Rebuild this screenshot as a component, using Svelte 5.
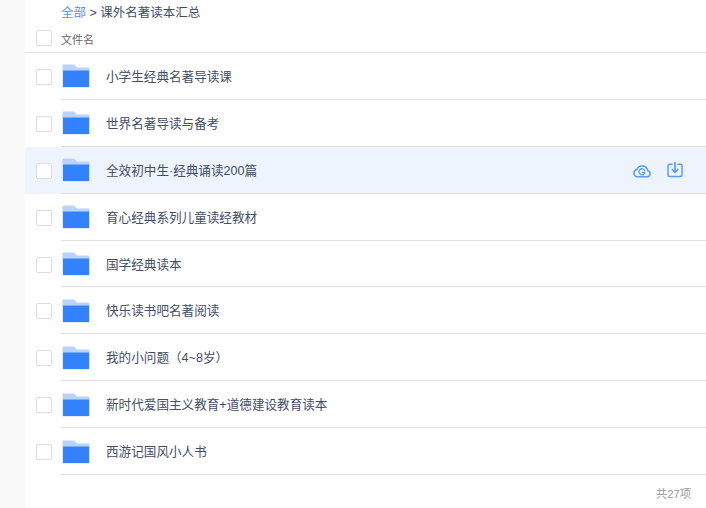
<script>
  const files = [
    '小学生经典名著导读课',
    '世界名著导读与备考',
    '全效初中生·经典诵读200篇',
    '育心经典系列儿童读经教材',
    '国学经典读本',
    '快乐读书吧名著阅读',
    '我的小问题（4~8岁）',
    '新时代爱国主义教育+道德建设教育读本',
    '西游记国风小人书'
  ];
  let hovered = $state(2);
</script>

<div class="page">
  <aside class="side"></aside>
  <main class="main">
    <div class="crumbs"><span class="link">全部</span> &gt; 课外名著读本汇总</div>
    <div class="head">
      <span class="check"></span>
      <span class="head-name">文件名</span>
    </div>
    <ul class="list">
      {#each files as name, i (name)}
        <li class="row" class:active={hovered === i}>
          <span class="check"></span>
          <div class="cell">
            <svg class="folder" width="28" height="24" viewBox="0 0 28 24">
              <path d="M.5 1.500 Q.5 .5 1.500 .5 H12 L15 3.500 H26.500 Q27.500 3.500 27.500 4.500 V8 H.5 Z" fill="#b9d3fb" />
              <path d="M.5 6.500 H27.500 V22.500 Q27.500 23.500 26.500 23.500 H1.500 Q.5 23.500 .5 22.500 Z" fill="#c5dafd" />
              <rect x="1" y="6.500" width="26" height="16.500" fill="#3281fd" />
            </svg>
            <span class="name">{name}</span>
            {#if hovered === i}
              <div class="actions">
                <svg width="18" height="15" viewBox="0 0 18 15" fill="none" stroke="#5a9bfb" stroke-width="1.500" stroke-linejoin="round" stroke-linecap="round">
                  <path d="M4 13.800 H14 A3.100 3.100 0 0 0 14.800 7.700 A5.800 5.800 0 0 0 3.800 6.400 A3.800 3.800 0 0 0 4 13.800 Z" />
                  <path d="M11.600 7.300 A3 3 0 1 0 11.900 9.500 H9.400" stroke-width="1.300" />
                </svg>
                <svg width="16" height="16" viewBox="0 0 16 16" fill="none" stroke="#5a9bfb" stroke-width="1.500" stroke-linejoin="round" stroke-linecap="round">
                  <path d="M5 2.300 H2.500 Q1 2.300 1 3.800 V13 Q1 14.500 2.500 14.500 H13.500 Q15 14.500 15 13 V3.800 Q15 2.300 13.500 2.300 H11" />
                  <path d="M8 .8 V10 M5.300 7.500 L8 10.300 L10.700 7.500" stroke-width="1.700" />
                </svg>
              </div>
            {/if}
          </div>
        </li>
      {/each}
    </ul>
    <div class="total">共27项</div>
  </main>
</div>

<style>
  :global(body) {
    margin: 0;
    background: #fff;
  }

  .page {
    display: flex;
    height: 508px;
    overflow: hidden;
    font-family: "Liberation Sans", "Noto Sans CJK SC", sans-serif;
    color: #424e67;
  }

  .side {
    width: 25px;
    flex: none;
    background: #f9f9f9;
  }

  .main {
    flex: 1;
    min-width: 0;
  }

  .crumbs {
    height: 25px;
    padding-left: 36px;
    font-size: 12.5px;
    line-height: 27px;
  }

  .link {
    color: #5a8ff5;
  }

  .head {
    display: flex;
    align-items: center;
    height: 27px;
    padding-left: 11px;
  }

  .head .check {
    margin-bottom: 2px;
  }

  .head-name {
    margin-left: 9px;
    font-size: 11px;
    color: #666;
  }

  .check {
    flex: none;
    box-sizing: border-box;
    width: 16px;
    height: 16px;
    border: 1px solid #ddd;
    border-radius: 2px;
    background: #fff;
  }

  .list {
    margin: 0;
    padding: 0;
    list-style: none;
    border-top: 1px solid #e0e0e0;
  }

  .row {
    display: flex;
    align-items: center;
    height: 46.9px;
    padding-left: 11px;
  }

  .row .check {
    margin-top: 1px;
  }

  .row.active {
    background: #edf4fe;
  }

  .cell {
    flex: 1;
    display: flex;
    align-items: center;
    align-self: stretch;
    margin-left: 9px;
    border-bottom: 1px solid #e0e0e0;
  }

  .folder {
    flex: none;
    margin-top: 1px;
    margin-left: 1px;
  }

  .name {
    margin-left: 16px;
    margin-bottom: 1px;
    font-size: 12.6px;
    color: #424e67;
  }

  .actions {
    display: flex;
    align-items: center;
    gap: 16px;
    margin-top: 1px;
    margin-left: auto;
    margin-right: 23px;
  }

  .total {
    padding: 10px 15px 0 0;
    text-align: right;
    font-size: 11.3px;
    color: #999;
  }
</style>
